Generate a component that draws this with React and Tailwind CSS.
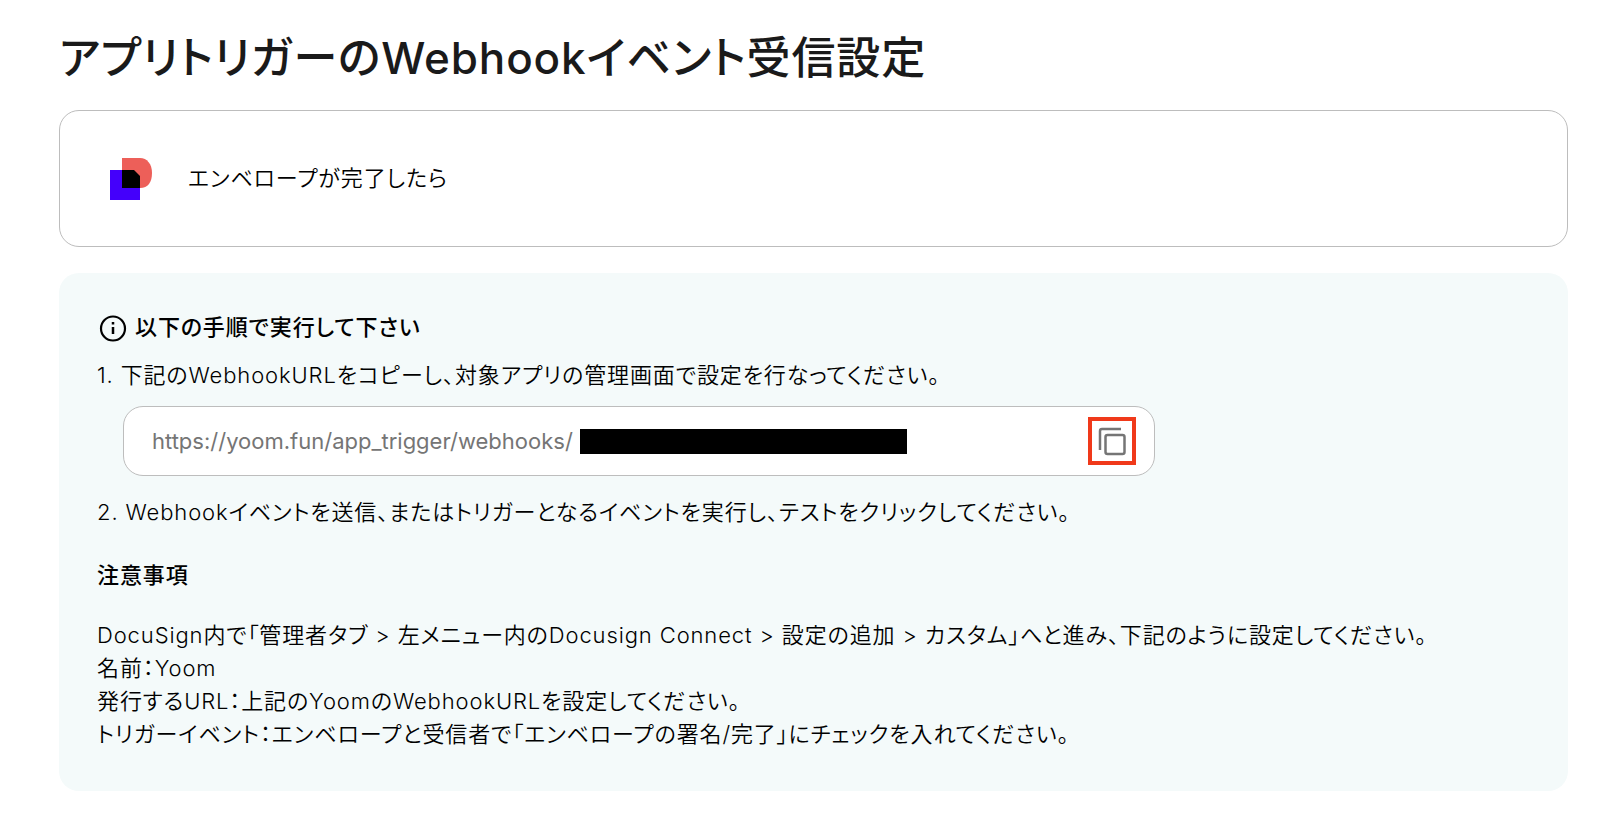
import React, { useState } from 'react';

const WEBHOOK_BASE = 'https://yoom.fun/app_trigger/webhooks/';

const DocusignLogo = () => (
  <svg className="w-11 h-11 shrink-0" viewBox="0 0 44 44" aria-hidden="true">
    <path d="M14 1h18c7 0 12 6 12 15s-4 15-12 15H14z" fill="#ed5f59" />
    <path d="M2 13h12v18h18v12H2z" fill="#4400fb" />
    <path d="M14 13h12l6 6v12H14z" fill="#000" />
  </svg>
);

const InfoIcon = () => (
  <svg className="w-8 h-8 shrink-0" viewBox="0 0 32 32" fill="none" stroke="currentColor" aria-hidden="true">
    <circle cx="16" cy="16.500" r="12" strokeWidth="2.200" />
    <path d="M16 15v7M16 10v2.500" strokeWidth="2.500" />
  </svg>
);

const CopyIcon = () => (
  <svg className="w-8 h-8 shrink-0" viewBox="0 0 32 32" fill="none" stroke="currentColor" strokeWidth="2.500" aria-hidden="true">
    <path d="M4 25V6a2 2 0 0 1 2-2h19" />
    <rect x="9.500" y="10" width="19" height="19" rx="2" />
  </svg>
);

const notes = [
  'DocuSign内で「管理者タブ > 左メニュー内のDocusign Connect > 設定の追加 > カスタム」へと進み、下記のように設定してください。',
  '名前：Yoom',
  '発行するURL：上記のYoomのWebhookURLを設定してください。',
  'トリガーイベント：エンベロープと受信者で「エンベロープの署名/完了」にチェックを入れてください。',
];

const App = () => {
  const [url, setUrl] = useState(WEBHOOK_BASE);

  const copyUrl = () => {
    navigator.clipboard?.writeText(url);
  };

  return (
    <main className="min-h-screen bg-white pl-[59px] pr-8 pt-7 pb-7 text-[22px] leading-[33px] tracking-[0.04em] font-[350] text-black font-['Inter','Noto_Sans_CJK_JP',sans-serif] [font-feature-settings:'palt']">
      <h1 className="text-[44px] leading-[60px] font-[540] text-[#1a1a1a]">
        アプリトリガーのWebhookイベント受信設定
      </h1>

      <section className="mt-[22px] h-[137px] flex items-center gap-9 rounded-[20px] border border-[#bdbdbd] px-12">
        <DocusignLogo />
        <p>エンベロープが完了したら</p>
      </section>

      <section className="mt-[26px] rounded-[20px] bg-[#f4fafa] px-[38px] pt-[38px] pb-10">
        <h2 className="flex items-center gap-[6px] font-[540]">
          <InfoIcon />
          以下の手順で実行して下さい
        </h2>

        <ol className="mt-[15px]">
          <li>
            <label htmlFor="webhook-url">1. 下記のWebhookURLをコピーし、対象アプリの管理画面で設定を行なってください。</label>
            <div className="mt-[14px] ml-[26px] h-[70px] max-w-[1032px] flex items-center justify-between rounded-[20px] border border-[#bdbdbd] bg-white pl-7 pr-[18px]">
              <div className="flex items-center text-[#757575]">
                <input
                  id="webhook-url"
                  value={url}
                  onChange={(e) => setUrl(e.target.value)}
                  className="w-[428px] font-normal tracking-normal outline-none"
                />
                <span className="h-[25px] w-[327px] bg-black" />
              </div>
              <button
                type="button"
                onClick={copyUrl}
                aria-label="コピー"
                className="w-12 h-12 flex items-center justify-center border-4 border-[#f0391a] text-[#757575]"
              >
                <CopyIcon />
              </button>
            </div>
          </li>
          <li className="mt-5">
            2. Webhookイベントを送信、またはトリガーとなるイベントを実行し、テストをクリックしてください。
          </li>
        </ol>

        <h3 className="mt-[30px] font-[540]">注意事項</h3>
        <div className="mt-[27px]">
          {notes.map((note) => (
            <p key={note}>{note}</p>
          ))}
        </div>
      </section>
    </main>
  );
};

export default App;
